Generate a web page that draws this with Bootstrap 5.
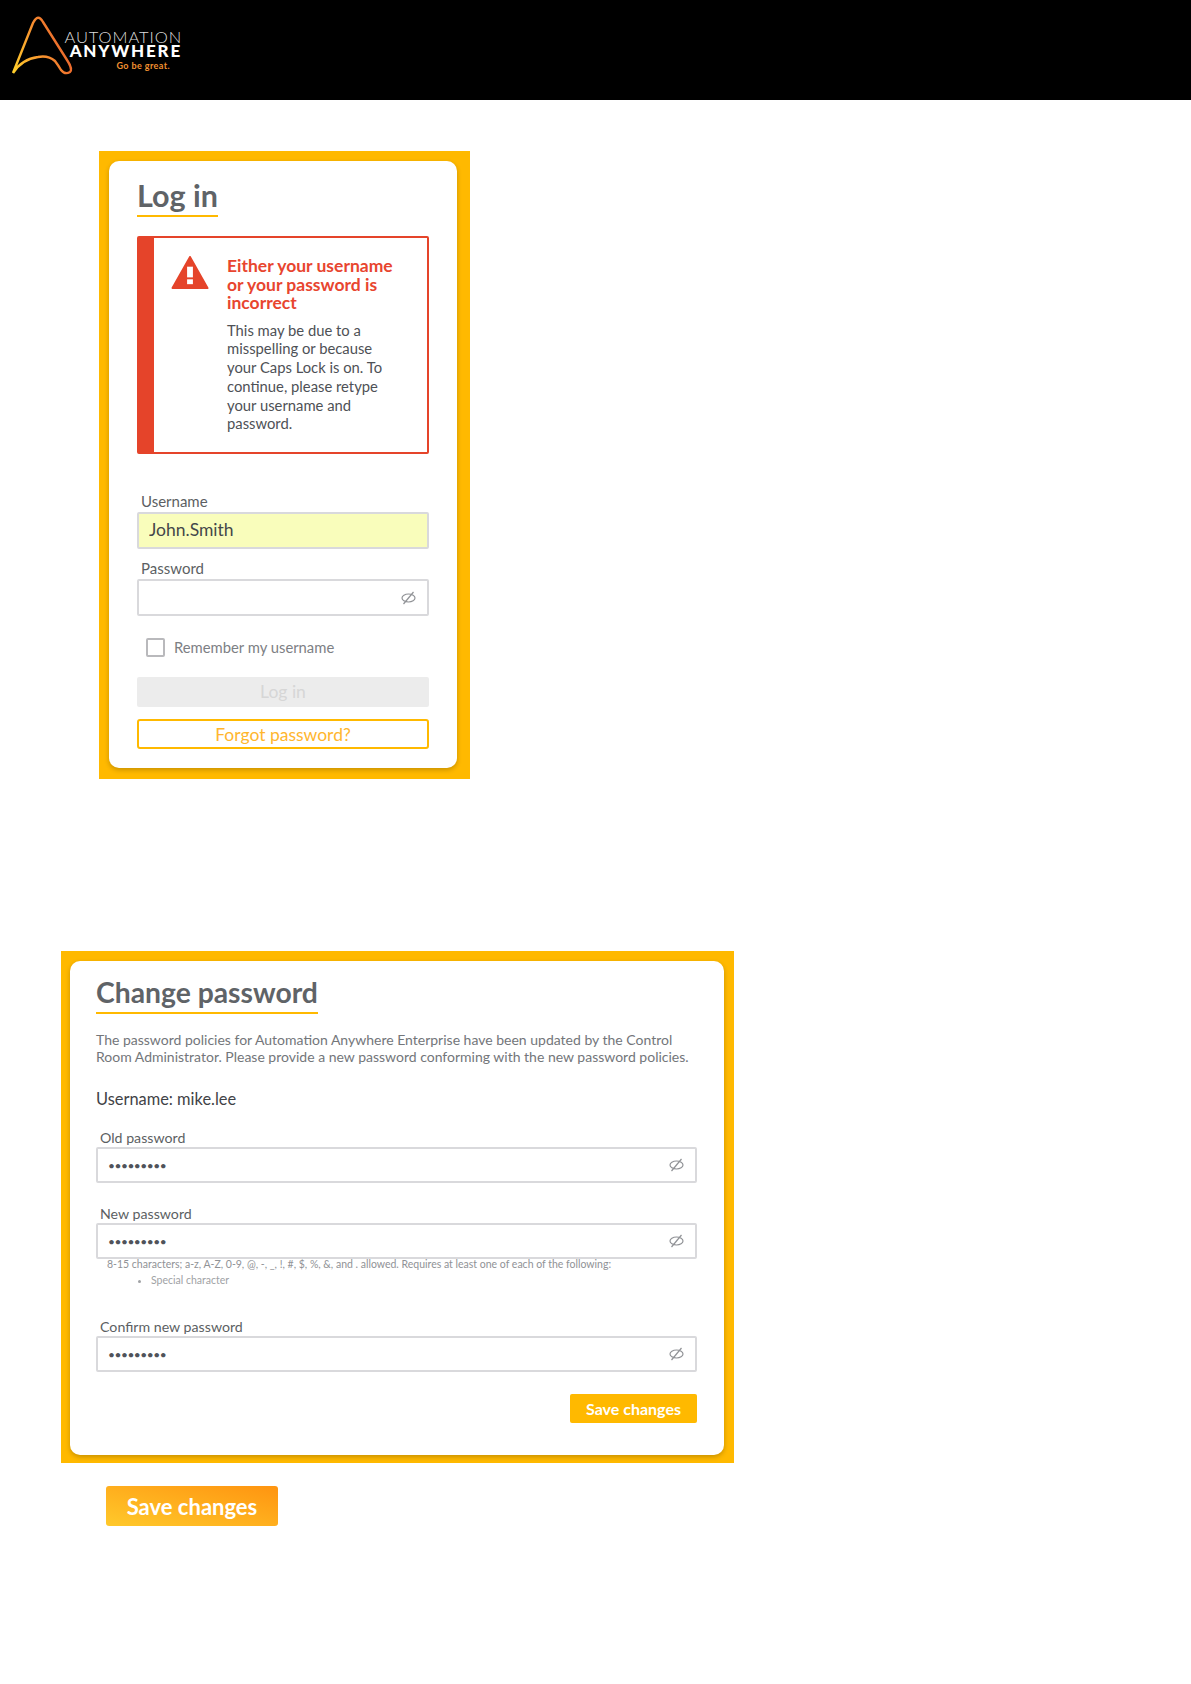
<!DOCTYPE html>
<html lang="en">

<head>
    <meta charset="UTF-8">
    <meta name="viewport" content="width=device-width, initial-scale=1.0">
    <title>Log in</title>
    <link href="https://cdn.jsdelivr.net/npm/bootstrap@5.3.2/dist/css/bootstrap.min.css" rel="stylesheet">
    <style>
        body { font-family: Lato, "Open Sans", sans-serif; color: #55585c; background: #fff; }
        .top-bar { height: 100px; background: #000; padding: 14px 0 0 11px; }
        .logo-words { margin-left: -17px; margin-top: 17px; text-align: right; width: 117px; }
        .logo-a { font-size: 16.500px; line-height: 13px; font-weight: 300; color: #dcdcdc; letter-spacing: .9px; margin-right: -1px; white-space: nowrap; }
        .logo-b { font-size: 17px; line-height: 14px; font-weight: 900; color: #fff; letter-spacing: 1.8px; margin: 0 -1px 0 -10px; white-space: nowrap; }
        .logo-c { font-size: 9px; line-height: 9px; font-weight: 700; color: #f29130; margin: 2.500px 11px 0 0; letter-spacing: .4px; }

        .frame { background: #ffb900; }
        .frame-login { width: 371px; margin: 51px 0 0 99px; padding: 10px 13px 11px 10px; }
        .frame-change { width: 673px; margin: 172px 0 0 61px; padding: 10px 10px 8px 9px; }
        .white-card { background: #fff; border: 0; border-radius: 10px; box-shadow: 0 2px 5px rgba(0, 0, 0, .22); padding: 20px 28px 19px; }
        .frame-change .white-card { padding: 17px 27px 32px 26px; }
        .page-title { display: inline-block; font-size: 30.500px; line-height: 29px; padding-bottom: 5px; font-weight: 700; color: #5f6367; border-bottom: 2px solid #ffb900; margin: 0; }
        .frame-change .page-title { font-size: 28.300px; }

        .err-box { display: flex; margin-top: 19px; height: 218px; border: 2px solid #e5442a; border-left-width: 17px; border-radius: 2px; padding: 19px 30px 0 17px; }
        .err-box svg { flex: none; margin-top: -1px; margin-right: 18px; }
        .err-title { font-size: 17.500px; line-height: 18.600px; font-weight: 700; color: #e8452f; margin: 0 0 8px; }
        .err-text { font-size: 14.800px; line-height: 18.700px; color: #4e5156; margin: 0; }

        .field-label { display: block; font-size: 15px; line-height: 18px; color: #5c5f63; padding-left: 4px; margin: 0 0 2px; }
        .field-wrap { position: relative; }
        .frame .form-control { height: 37px; border: 2px solid #d9d9dc; border-radius: 2px; padding: 0 30px 2px 10px; font-size: 17.500px; color: #44474a; box-shadow: none; }
        .frame-change .form-control { height: 36px; padding-bottom: 0; font-size: 12px; letter-spacing: -.5px; color: #50535a; }
        .auto-filled.form-control { background: #f9fdbb; }
        .eye-icon { position: absolute; right: 13px; top: 50%; margin-top: -7px; }
        .gap-user { margin-top: 38px; }
        .gap-pass { margin-top: 10px; }

        .remember { display: flex; align-items: center; margin: 20px 0 0 9px; min-height: 19px; padding: 0; font-size: 14.800px; color: #7d8084; }
        .remember .form-check-input { width: 19px; height: 19px; margin: 0 9px 0 0; float: none; border: 2px solid #b9b9bc; border-radius: 2px; }
        .remember .form-check-label { opacity: 1; }

        .btn-off.btn { display: block; width: 100%; height: 30px; margin-top: 19px; padding: 0; border: 0; border-radius: 2px; background: #ececec; color: #d6d6d6; font-size: 17.500px; opacity: 1; }
        .btn-forgot.btn { display: block; width: 100%; height: 30px; margin-top: 12px; padding: 0; border: 2px solid #ffb900; border-radius: 3px; background: #fff; color: #ffb62e; font-size: 17.500px; line-height: 25px; }

        .policy-text { font-size: 14px; line-height: 17px; color: #73767a; margin: 17px 0 0; }
        .user-line { font-size: 16.400px; line-height: 20px; color: #3f4246; margin: 24px 0 0; }
        .gap-old { margin-top: 20px; }
        .gap-new { margin-top: 22px; }
        .gap-confirm { margin-top: 30px; }
        .frame-change .field-label { font-size: 14.200px; margin-bottom: 0; }
        .hint-text { font-size: 10.500px; line-height: 15px; color: #909296; padding-left: 11px; margin: -2px 0 0; }
        .hint-list { font-size: 10.500px; line-height: 16px; color: #a0a2a5; margin: 0; padding-left: 55px; }

        .btn-save.btn { padding: 0; width: 127px; height: 29px; border: 0; border-radius: 2px; background: #ffb900; color: #fff; font-size: 16px; font-weight: 700; margin-top: 22px; }
        .btn-big.btn { display: block; padding: 0; width: 172px; height: 40px; margin: 23px 0 0 106px; border: 0; border-radius: 3px; background: linear-gradient(to top right, #ffc92b, #ff9410); color: #fff; font-size: 22px; font-weight: 700; }
    </style>
</head>

<body>
    <div class="top-bar d-flex">
        <svg width="70" height="64" viewBox="11 14 70 64" fill="none">
            <defs>
                <linearGradient id="logoGrad" x1="0" y1="1" x2="1" y2="0.6">
                    <stop offset="0" stop-color="#ffd02b" />
                    <stop offset="0.5" stop-color="#f9982f" />
                    <stop offset="1" stop-color="#e9602c" />
                </linearGradient>
            </defs>
            <path d="M13 73 L33 23 Q38 13 43 22 L67 60 Q73 69 70 72 Q65 75 61 70 Q58 65 55 61 Q48 55 38 57 Q22 59 13 73"
                stroke="url(#logoGrad)" stroke-width="2.400" stroke-linejoin="round" />
        </svg>
        <div class="logo-words">
            <div class="logo-a">AUTOMATION</div>
            <div class="logo-b">ANYWHERE</div>
            <div class="logo-c">Go be great.</div>
        </div>
    </div>

    <div class="frame frame-login">
        <div class="card white-card">
            <div><h1 class="page-title">Log in</h1></div>
            <div class="err-box">
                <svg width="38" height="34" viewBox="0 0 38 35">
                    <path d="M19 1 L37 33 H1 Z" fill="#e5442a" stroke="#e5442a" stroke-width="2" stroke-linejoin="round" />
                    <rect x="16" y="11" width="6" height="11" fill="#fff" />
                    <rect x="16" y="24" width="6" height="5" fill="#fff" />
                </svg>
                <div>
                    <p class="err-title">Either your username or your password is incorrect</p>
                    <p class="err-text">This may be due to a misspelling or because your Caps Lock is on. To continue, please retype your username and password.</p>
                </div>
            </div>
            <form>
                <div class="gap-user">
                    <label class="field-label" for="username">Username</label>
                    <input id="username" type="text" class="form-control auto-filled" value="John.Smith">
                </div>
                <div class="gap-pass">
                    <label class="field-label" for="password">Password</label>
                    <div class="field-wrap">
                        <input id="password" type="password" class="form-control">
                        <svg class="eye-icon" width="15" height="14" viewBox="0 0 15 14" fill="none" stroke="#909296" stroke-width="1.200">
                            <ellipse cx="7.500" cy="7" rx="6.500" ry="4" />
                            <path d="M2.500 13 L12.500 1" />
                        </svg>
                    </div>
                </div>
                <div class="form-check remember">
                    <input class="form-check-input" type="checkbox" id="rememberMe">
                    <label class="form-check-label" for="rememberMe">Remember my username</label>
                </div>
                <button type="button" class="btn btn-off" disabled>Log in</button>
                <button type="button" class="btn btn-forgot">Forgot password?</button>
            </form>
        </div>
    </div>

    <div class="frame frame-change">
        <div class="card white-card">
            <div><h1 class="page-title">Change password</h1></div>
            <p class="policy-text">The password policies for Automation Anywhere Enterprise have been updated by the Control Room Administrator. Please provide a new password conforming with the new password policies.</p>
            <p class="user-line">Username: mike.lee</p>
            <form>
                <div class="gap-old">
                    <label class="field-label" for="oldPass">Old password</label>
                    <div class="field-wrap">
                        <input id="oldPass" type="password" class="form-control" value="123456789">
                        <svg class="eye-icon" width="15" height="14" viewBox="0 0 15 14" fill="none" stroke="#909296" stroke-width="1.200">
                            <ellipse cx="7.500" cy="7" rx="6.500" ry="4" />
                            <path d="M2.500 13 L12.500 1" />
                        </svg>
                    </div>
                </div>
                <div class="gap-new">
                    <label class="field-label" for="newPass">New password</label>
                    <div class="field-wrap">
                        <input id="newPass" type="password" class="form-control" value="123456789">
                        <svg class="eye-icon" width="15" height="14" viewBox="0 0 15 14" fill="none" stroke="#909296" stroke-width="1.200">
                            <ellipse cx="7.500" cy="7" rx="6.500" ry="4" />
                            <path d="M2.500 13 L12.500 1" />
                        </svg>
                    </div>
                    <p class="hint-text">8-15 characters; a-z, A-Z, 0-9, @, -, _, !, #, $, %, &amp;, and . allowed. Requires at least one of each of the following:</p>
                    <ul class="hint-list">
                        <li>Special character</li>
                    </ul>
                </div>
                <div class="gap-confirm">
                    <label class="field-label" for="confirmPass">Confirm new password</label>
                    <div class="field-wrap">
                        <input id="confirmPass" type="password" class="form-control" value="123456789">
                        <svg class="eye-icon" width="15" height="14" viewBox="0 0 15 14" fill="none" stroke="#909296" stroke-width="1.200">
                            <ellipse cx="7.500" cy="7" rx="6.500" ry="4" />
                            <path d="M2.500 13 L12.500 1" />
                        </svg>
                    </div>
                </div>
                <div class="d-flex justify-content-end">
                    <button type="button" class="btn btn-save">Save changes</button>
                </div>
            </form>
        </div>
    </div>

    <button type="button" class="btn btn-big">Save changes</button>

    <script src="https://cdn.jsdelivr.net/npm/bootstrap@5.3.2/dist/js/bootstrap.bundle.min.js"></script>
</body>

</html>
